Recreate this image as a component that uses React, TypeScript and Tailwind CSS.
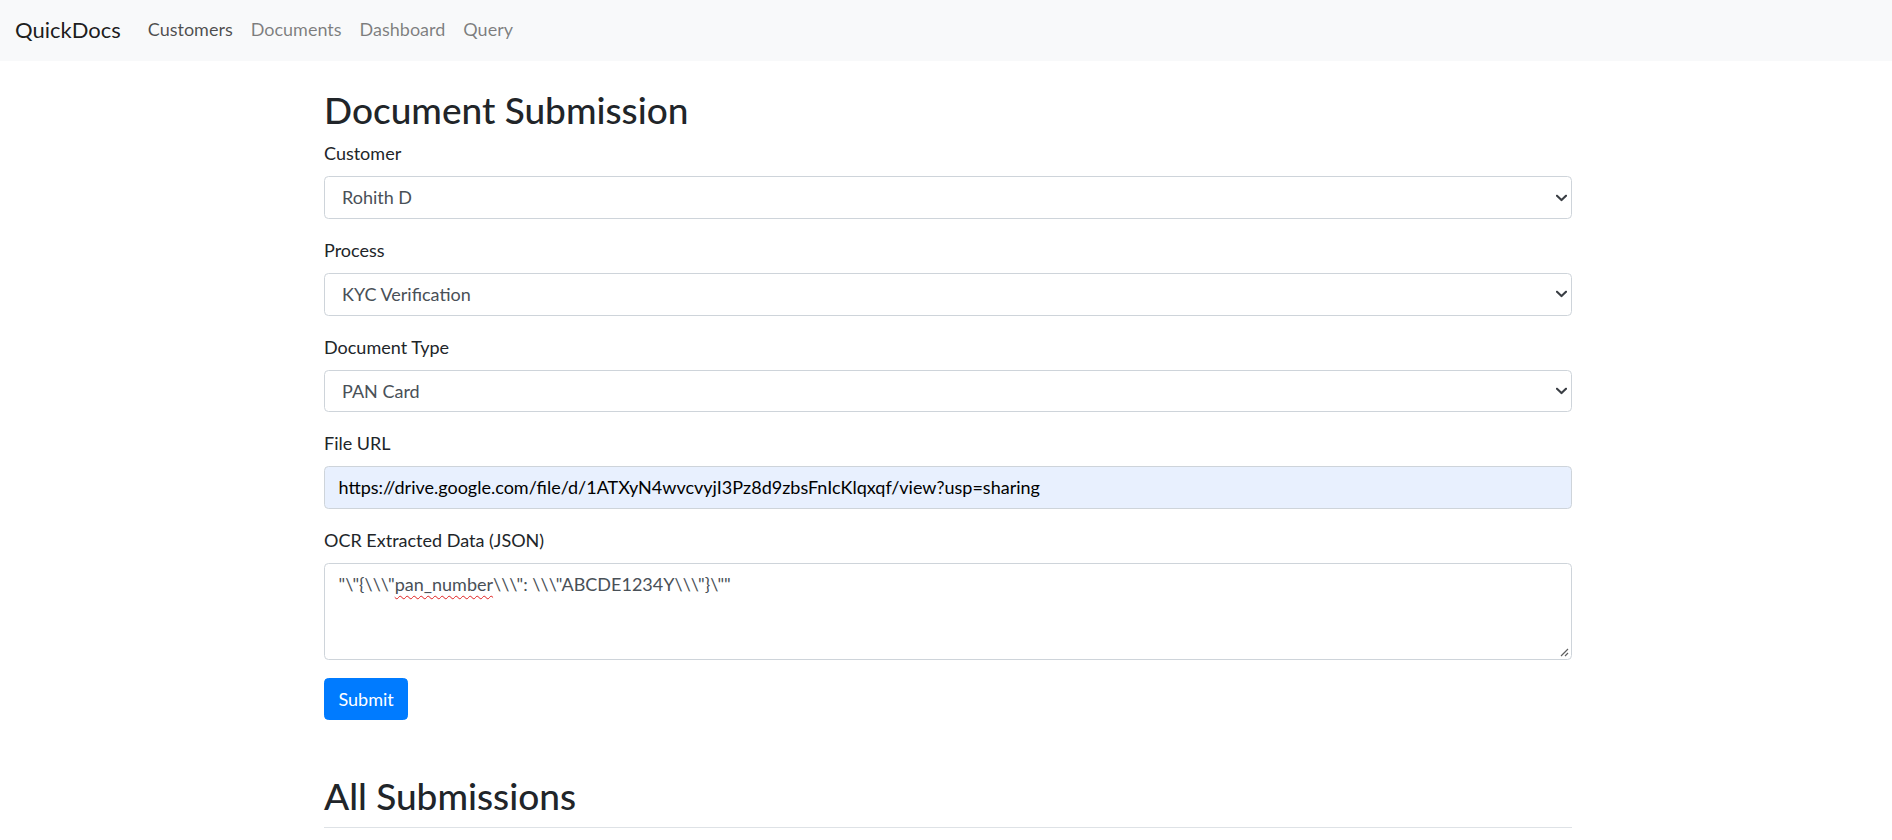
import React from "react";

function Chevron() {
  return (
    <svg
      className="absolute right-[5px] top-1/2 -translate-y-1/2 pointer-events-none"
      width="11"
      height="7"
      viewBox="0 0 11 7"
      fill="none"
    >
      <path d="M1 1.2 L5.5 5.5 L10 1.2" stroke="#3b3f45" strokeWidth="2" strokeLinecap="square" />
    </svg>
  );
}

function SelectField({ label, value }: { label: string; value: string }) {
  return (
    <div className="mb-[18px]">
      <label className="block text-[18px] leading-[27px] mb-[9px]">{label}</label>
      <div className="relative">
        <select
          className="w-full h-[42.75px] appearance-none bg-white border border-[#ced4da] rounded-[4.5px] pl-[17px] pr-[30px] text-[18px] leading-[27px] text-[#495057] outline-none [font-family:Lato,sans-serif]"
          defaultValue={value}
        >
          <option value={value}>{value}</option>
        </select>
        <Chevron />
      </div>
    </div>
  );
}

const ocrText = "\"\\\"{\\\\\\\"";
const ocrRest = "\\\\\\\": \\\\\\\"ABCDE1234Y\\\\\\\"}\\\"\"";

export default function App() {
  return (
    <div className="min-h-screen bg-white text-[#212529] [font-family:Lato,sans-serif]">
      <nav className="h-[61px] bg-[#f8f9fa] flex items-start pl-[15px] pr-[18px]">
        <a className="block text-[22px] leading-[33px] pt-[13px] mr-[18px] text-[rgba(0,0,0,0.9)]">QuickDocs</a>
        <div className="flex pt-[7px]">
          <a className="block px-[9px] py-[9px] text-[18px] leading-[27px] text-[rgba(0,0,0,0.7)]">Customers</a>
          <a className="block px-[9px] py-[9px] text-[18px] leading-[27px] text-[rgba(0,0,0,0.5)]">Documents</a>
          <a className="block px-[9px] py-[9px] text-[18px] leading-[27px] text-[rgba(0,0,0,0.5)]">Dashboard</a>
          <a className="block px-[9px] py-[9px] text-[18px] leading-[27px] text-[rgba(0,0,0,0.5)]">Query</a>
        </div>
      </nav>

      <main className="w-[1252px] mx-auto pl-[4px] pt-[27px]">
        <h2 className="text-[37px] leading-[43.2px] font-medium mb-[9px]">Document Submission</h2>

        <SelectField label="Customer" value="Rohith D" />
        <SelectField label="Process" value="KYC Verification" />
        <SelectField label="Document Type" value="PAN Card" />

        <div className="mb-[18px]">
          <label className="block text-[18px] leading-[27px] mb-[9px]">File URL</label>
          <div className="h-[42.75px] bg-[#e8f0fe] border border-[#ced4da] rounded-[4.5px] px-[13.5px] flex items-center text-[18px] leading-[27px] text-black">
            https://drive.google.com/file/d/1ATXyN4wvcvyjI3Pz8d9zbsFnIcKlqxqf/view?usp=sharing
          </div>
        </div>

        <div className="mb-[18px]">
          <label className="block text-[18px] leading-[27px] mb-[9px]">OCR Extracted Data (JSON)</label>
          <div className="relative h-[96.5px] bg-white border border-[#ced4da] rounded-[4.5px] px-[13.5px] py-[6.75px] text-[18px] leading-[27px] text-[#495057] whitespace-pre">
            {ocrText}
            <span className="underline decoration-wavy decoration-[#e02020] decoration-1 underline-offset-[4px]">pan_number</span>
            {ocrRest}
            <svg className="absolute right-[2px] bottom-[2px]" width="9" height="9" viewBox="0 0 9 9" fill="none">
              <path d="M8 1 L1 8 M8 5 L5 8" stroke="#5f5f5f" strokeWidth="1.2" />
            </svg>
          </div>
        </div>

        <button className="h-[42.75px] px-[13.5px] bg-[#007bff] border border-[#007bff] rounded-[4.5px] text-white text-[18px] leading-[27px]">
          Submit
        </button>

        <h2 className="mt-[54px] text-[37px] leading-[43.2px] font-medium mb-[9px]">All Submissions</h2>
        <div className="border-t border-[#dee2e6] h-[40px]"></div>
      </main>
    </div>
  );
}
